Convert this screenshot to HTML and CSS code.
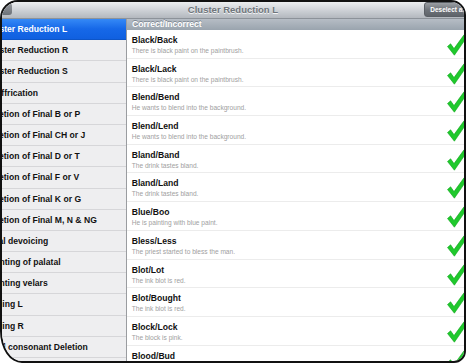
FILE: index.html
```html
<!DOCTYPE html>
<html lang="en">
  <head>
    <meta charset="UTF-8" />
    <meta name="viewport" content="width=device-width, initial-scale=1.0" />
    <title>Cluster Reduction L</title>
    <link rel="stylesheet" href="styles.css">
  </head>
  <body>
    <div class="device">
      <div class="topbar">
        <div class="back-btn"></div>
        <div class="title">Cluster Reduction L</div>
        <div class="deselect-btn">Deselect all</div>
      </div>
      <div class="split">
        <div class="side">
          <div class="side-list">
            <div class="side-item selected">Cluster Reduction L</div>
            <div class="side-item">Cluster Reduction R</div>
            <div class="side-item">Cluster Reduction S</div>
            <div class="side-item">Deaffrication</div>
            <div class="side-item">Deletion of Final B or P</div>
            <div class="side-item">Deletion of Final CH or J</div>
            <div class="side-item">Deletion of Final D or T</div>
            <div class="side-item">Deletion of Final F or V</div>
            <div class="side-item">Deletion of Final K or G</div>
            <div class="side-item">Deletion of Final M, N &amp; NG</div>
            <div class="side-item">Final devoicing</div>
            <div class="side-item">Fronting of palatal</div>
            <div class="side-item">Fronting velars</div>
            <div class="side-item">Gliding L</div>
            <div class="side-item">Gliding R</div>
            <div class="side-item">Final consonant Deletion</div>
          </div>
        </div>
        <div class="main">
          <div class="section-head">Correct/Incorrect</div>
          <div class="word-list" id="words">
            <!-- rows are filled in below -->
          </div>
        </div>
      </div>
    </div>

    <script>
      const words = [
        ["Black/Back", "There is black paint on the paintbrush."],
        ["Black/Lack", "There is black paint on the paintbrush."],
        ["Blend/Bend", "He wants to blend into the background."],
        ["Blend/Lend", "He wants to blend into the background."],
        ["Bland/Band", "The drink tastes bland."],
        ["Bland/Land", "The drink tastes bland."],
        ["Blue/Boo", "He is painting with blue paint."],
        ["Bless/Less", "The priest started to bless the man."],
        ["Blot/Lot", "The ink blot is red."],
        ["Blot/Bought", "The ink blot is red."],
        ["Block/Lock", "The block is pink."],
        ["Blood/Bud", "The blood is red."],
      ];

      const check =
        '<svg class="check" width="20" height="22" viewBox="0 0 20 22">' +
        '<path d="M0.5 12.5 L3.6 9.8 L7 14.6 L17.2 0.6 L20 3 L7.4 21.2 Z" fill="#1fc92c" stroke="#12a51f" stroke-width="0.6" stroke-linejoin="round"/>' +
        "</svg>";

      const list = document.getElementById("words");
      words.forEach(([title, sentence]) => {
        const row = document.createElement("div");
        row.classList.add("word-row");
        row.innerHTML =
          '<div class="word-text"><div class="word-title">' + title +
          '</div><div class="word-sub">' + sentence + "</div></div>" + check;
        list.appendChild(row);
      });
    </script>
  </body>
</html>
```

FILE: styles.css
```css
body {
  margin: 0;
  background-color: #fff;
  font-family: "Liberation Sans", Arial, sans-serif;
}
.device {
  width: 466px;
  height: 363px;
  box-sizing: border-box;
  border: 2px solid #111;
  border-radius: 18px 15px 12px 22px / 18px 15px 12px 32px;
  overflow: hidden;
  display: flex;
  flex-direction: column;
  background-color: #fff;
}
.topbar {
  height: 16px;
  flex-shrink: 0;
  display: grid;
  grid-template-columns: 1fr auto 1fr;
  align-items: center;
  background: linear-gradient(#eceef0, #c9cdd2 60%, #b3b8be);
  border-bottom: 1px solid #8c9299;
}
.back-btn {
  width: 40px;
  height: 12px;
  margin-left: -30px;
  margin-top: -2px;
  border-radius: 3px;
  background: linear-gradient(#979ba0, #6c7177);
}
.title {
  font-size: 9.5px;
  font-weight: bold;
  color: #6f757b;
  margin-top: -1px;
  text-shadow: 0 1px 0 #f4f5f6;
}
.deselect-btn {
  justify-self: end;
  margin-right: -8px;
  margin-top: -1px;
  padding: 0 5px;
  height: 13px;
  line-height: 13px;
  border-radius: 3px;
  border: 1px solid #5a5f65;
  background: linear-gradient(#9a9ea3, #6d7278 55%, #5f646a);
  color: #fff;
  font-size: 6.5px;
  font-weight: bold;
  white-space: nowrap;
}
.split {
  flex: 1;
  display: flex;
  min-height: 0;
}
.side {
  width: 124px;
  flex-shrink: 0;
  overflow: hidden;
  background-color: #eeeef0;
  border-right: 1px solid #9a9ca0;
}
.side-list {
  margin-left: -23px;
}
.side-item {
  height: 21.2px;
  box-sizing: border-box;
  padding-left: 6.6px;
  line-height: 20.2px;
  font-size: 8.6px;
  font-weight: bold;
  color: #111;
  white-space: nowrap;
  border-bottom: 1px solid #d6d6d9;
}
.side-item.selected {
  color: #fff;
  background: linear-gradient(#3589f6, #1668e8 50%, #1060e0);
  border-bottom-color: #0d55c8;
}
.main {
  flex: 1;
  min-width: 0;
  display: flex;
  flex-direction: column;
}
.section-head {
  height: 11px;
  flex-shrink: 0;
  line-height: 11px;
  padding-left: 5px;
  background: linear-gradient(#b6bdc5, #9aa4ae);
  color: #fff;
  font-size: 8.6px;
  font-weight: bold;
  text-shadow: 0 -1px 0 #7d8792;
}
.word-row {
  height: 28.7px;
  box-sizing: border-box;
  display: flex;
  align-items: flex-start;
  padding: 4px 0 0 4.7px;
  border-bottom: 1.5px solid #ececec;
}
.word-text {
  padding-top: 1px;
}
.word-title {
  font-size: 8.6px;
  font-weight: bold;
  color: #111;
  line-height: 10px;
}
.word-sub {
  font-size: 6.6px;
  color: #a0a0a0;
  line-height: 9px;
  margin-top: 1px;
}
.check {
  margin-left: auto;
  margin-right: -3px;
  flex-shrink: 0;
}
```
